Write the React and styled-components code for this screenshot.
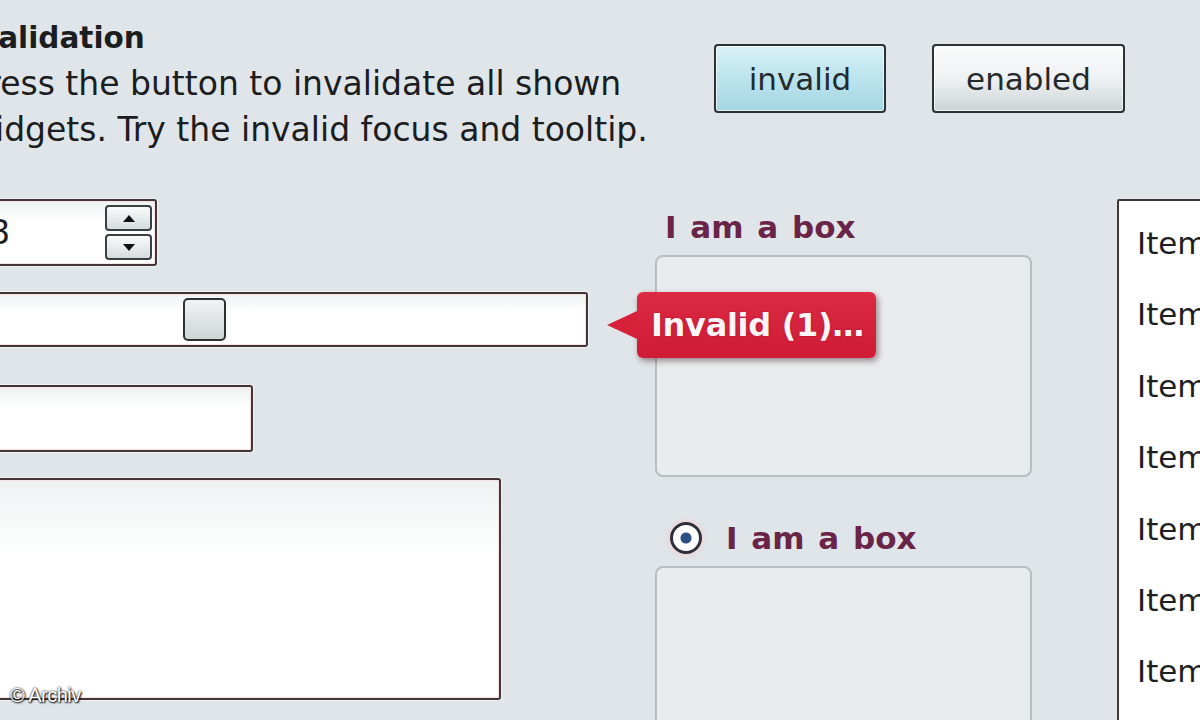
import styled, { createGlobalStyle } from 'styled-components'

const GlobalStyle = createGlobalStyle`
	body {
		margin: 0;
		overflow: hidden;
		font-family: 'DejaVu Sans', 'Liberation Sans', sans-serif;
	}
`

const items = Array.from({ length: 10 }, (_, i) => `Item ${i + 1}`)

export default function App() {
	return (
		<Stage>
			<GlobalStyle />
			<Page>
				{/* Header with description and the two toggle buttons */}
				<Header>
					<Description>
						<Heading>Validation</Heading>
						<Line>Press the button to invalidate all shown</Line>
						<Line>widgets. Try the invalid focus and tooltip.</Line>
					</Description>
					<Buttons>
						<Button $active>invalid</Button>
						<Button>enabled</Button>
					</Buttons>
				</Header>

				<Body>
					{/* Left column: form widgets */}
					<Column>
						<Spinner>
							<SpinnerValue>8</SpinnerValue>
							<SpinnerButtons>
								<SpinButton>
									<Arrow $up />
								</SpinButton>
								<SpinButton>
									<Arrow />
								</SpinButton>
							</SpinnerButtons>
						</Spinner>

						<SliderRow>
							<Slider>
								<Knob $value={34.6} />
							</Slider>
							<Tooltip>
								<TooltipText>Invalid (1)…</TooltipText>
							</Tooltip>
						</SliderRow>

						<TextField $top={38} />
						<TextArea $top={26} />
					</Column>

					{/* Middle column: group boxes */}
					<Column>
						<Legend>I am a box</Legend>
						<GroupBox />
						<Legend $top={38}>
							<Radio />
							<span>I am a box</span>
						</Legend>
						<GroupBox />
					</Column>

					{/* Right column: list */}
					<List>
						{items.map((item) => (
							<ListItem key={item}>{item}</ListItem>
						))}
					</List>
				</Body>
			</Page>
			<Watermark>© Archiv</Watermark>
		</Stage>
	)
}

// Styled components
const Stage = styled.div`
	position: relative;
	width: 1200px;
	height: 720px;
	overflow: hidden;
	background: #dfe5e8;
`

const Page = styled.div`
	margin-left: -32px;
	padding-top: 15px;
	width: 1300px;
`

const Header = styled.header`
	display: flex;
	align-items: flex-start;
`

const Description = styled.div`
	width: 746px;
	color: #1b1d20;
`

const Heading = styled.h1`
	margin: 0;
	font-size: 29.5px;
	line-height: 46px;
	font-weight: bold;
	padding-left: 9px;
`

const Line = styled.p`
	margin: 0;
	font-size: 33px;
	line-height: 46px;
	white-space: nowrap;
`

const Buttons = styled.div`
	display: flex;
	gap: 46px;
	margin-top: 29px;
`

const Button = styled.button`
	height: 69px;
	padding: 0 28px;
	border: 2px solid #2b3134;
	border-radius: 4px;
	font-family: 'DejaVu Sans', sans-serif;
	font-size: 31px;
	color: #24292c;
	background: ${(p) =>
		p.$active
			? 'linear-gradient(#d9f1f6, #b9e2ec 55%, #a5d6e3)'
			: 'linear-gradient(#fbfcfc, #eef1f2 50%, #cdd4d6)'};
	box-shadow: inset 0 0 0 1px rgba(255, 255, 255, 0.7);
	min-width: ${(p) => (p.$active ? '172px' : '193px')};
`

const Body = styled.main`
	display: grid;
	grid-template-columns: 620px 377px 200px;
	column-gap: 67px;
	margin-top: 46px;

	& > :last-child {
		margin-left: 18px;
	}
`

const Column = styled.div`
	display: flex;
	flex-direction: column;
	align-items: flex-start;
`

const Field = styled.div`
	box-sizing: border-box;
	border: 2px solid #433535;
	border-radius: 3px;
	background: linear-gradient(#eef2f2, #ffffff 35%, #ffffff);
	box-shadow: inset 0 0 0 1px #f6e3e3, 0 0 0 1px rgba(255, 255, 255, 0.5);
`

const Spinner = styled(Field)`
	width: 189px;
	height: 67px;
	display: flex;
	align-items: center;
	justify-content: space-between;
	padding: 0 3px 0 19px;
`

const SpinnerValue = styled.span`
	font-size: 33px;
	color: #1d1f22;
`

const SpinnerButtons = styled.div`
	display: flex;
	flex-direction: column;
	gap: 3px;
`

const SpinButton = styled.div`
	box-sizing: border-box;
	width: 47px;
	height: 26px;
	border: 2px solid #3a3f42;
	border-radius: 4px;
	background: linear-gradient(#fafbfb, #d6dcdd);
	display: flex;
	align-items: center;
	justify-content: center;
`

const Arrow = styled.span`
	width: 0;
	height: 0;
	border-left: 6px solid transparent;
	border-right: 6px solid transparent;
	${(p) =>
		p.$up
			? 'border-bottom: 7px solid #111;'
			: 'border-top: 7px solid #111;'}
`

const SliderRow = styled.div`
	position: relative;
	margin-top: 26px;
`

const Slider = styled(Field)`
	position: relative;
	width: 620px;
	height: 55px;
`

const Knob = styled.div`
	position: absolute;
	top: 4px;
	left: ${(p) => p.$value}%;
	box-sizing: border-box;
	width: 43px;
	height: 43px;
	border: 2px solid #2c3134;
	border-radius: 5px;
	background: linear-gradient(#f1f3f3, #cdd5d5);
`

const Tooltip = styled.div`
	position: absolute;
	left: 669px;
	top: 0;
	width: 239px;
	height: 66px;
	box-sizing: border-box;
	border-radius: 6px;
	background: linear-gradient(#dc2a44, #cf1b35);
	box-shadow: 2px 3px 6px rgba(60, 0, 10, 0.45);
	display: flex;
	align-items: center;
	padding-left: 14px;

	&::before {
		content: '';
		position: absolute;
		left: -30px;
		top: 19px;
		border-top: 14px solid transparent;
		border-bottom: 14px solid transparent;
		border-right: 30px solid #d7213b;
	}
`

const TooltipText = styled.span`
	color: #fff4f6;
	font-size: 32px;
	font-weight: bold;
	letter-spacing: -0.3px;
	text-shadow: 0 0 2px rgba(120, 0, 20, 0.6);
	white-space: nowrap;
`

const TextField = styled(Field)`
	width: 285px;
	height: 67px;
	margin-top: ${(p) => p.$top}px;
`

const TextArea = styled(Field)`
	width: 533px;
	height: 222px;
	margin-top: ${(p) => p.$top}px;
`

const Legend = styled.div`
	display: flex;
	align-items: center;
	gap: 24px;
	height: 46px;
	margin-top: ${(p) => (p.$top ? p.$top : 5)}px;
	padding-left: ${(p) => (p.$top ? 15 : 10)}px;
	font-size: 31px;
	font-weight: bold;
	word-spacing: 3px;
	color: #6a2448;
`

const Radio = styled.span`
	box-sizing: border-box;
	width: 32px;
	height: 32px;
	border-radius: 50%;
	border: 3px solid #2d2f3a;
	background: radial-gradient(circle, #2b4f85 0 5px, #ffffff 6px);
	box-shadow: 0 0 4px 2px rgba(255, 200, 210, 0.6);
`

const GroupBox = styled.div`
	box-sizing: border-box;
	width: 377px;
	height: 222px;
	margin-top: 5px;
	border: 2px solid #b9bec1;
	border-radius: 8px;
	background: #e8ecee;
`

const List = styled.ul`
	margin: 0;
	list-style: none;
	box-sizing: border-box;
	width: 200px;
	height: 600px;
	padding: 7px 0 0 18px;
	border: 2px solid #433535;
	border-radius: 2px;
	background: #ffffff;
`

const ListItem = styled.li`
	height: 71.4px;
	line-height: 71.4px;
	font-size: 31px;
	color: #1d1f22;
	white-space: nowrap;
`

const Watermark = styled.span`
	position: absolute;
	left: 10px;
	top: 684px;
	font-family: 'Liberation Sans', sans-serif;
	font-size: 20px;
	letter-spacing: -0.5px;
	color: #ffffff;
	text-shadow: 0 0 2px #000, 1px 1px 2px #000;
`
